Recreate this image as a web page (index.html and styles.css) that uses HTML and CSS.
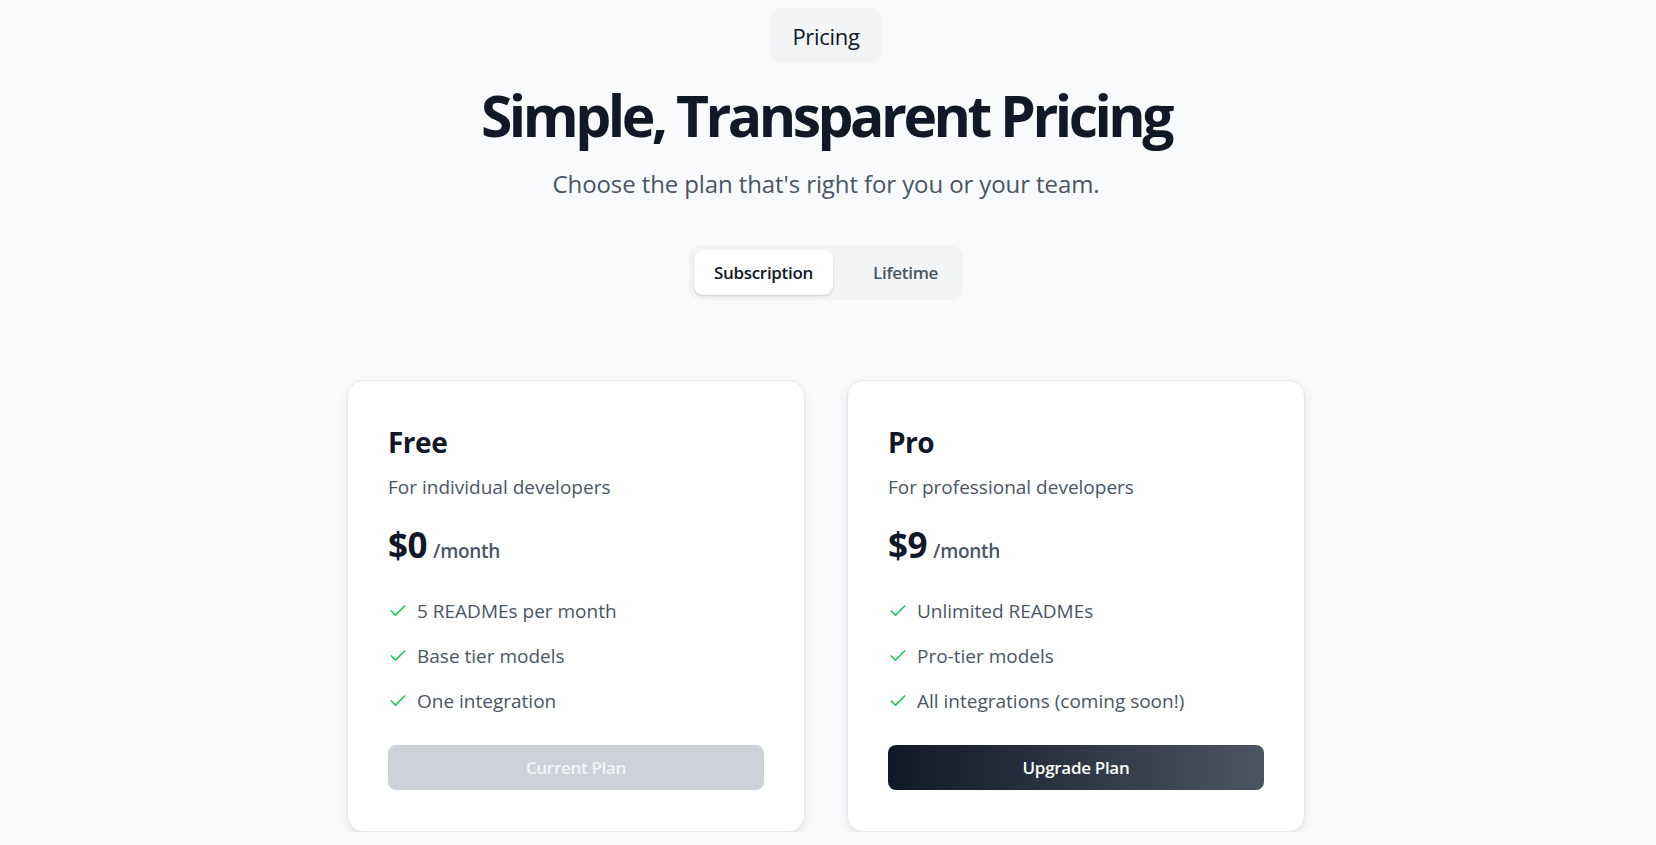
FILE: index.html
```html
<!DOCTYPE html>
<html lang="en">
<head>
<meta charset="utf-8">
<title>Pricing</title>
<link rel="stylesheet" href="styles.css">
</head>
<body>
<main class="page">
  <div class="badge">Pricing</div>
  <h1 class="title">Simple, Transparent Pricing</h1>
  <p class="subtitle">Choose the plan that's right for you or your team.</p>

  <div class="toggle">
    <button class="tab tab-active">Subscription</button>
    <button class="tab">Lifetime</button>
  </div>

  <section class="cards">
    <article class="card">
      <h2 class="plan-name">Free</h2>
      <p class="plan-desc">For individual developers</p>
      <div class="price"><span class="amount">$0</span><span class="period">/month</span></div>
      <ul class="features">
        <li><svg class="check" viewBox="0 0 24 24"><polyline points="20 6 9 17 4 12"/></svg>5 READMEs per month</li>
        <li><svg class="check" viewBox="0 0 24 24"><polyline points="20 6 9 17 4 12"/></svg>Base tier models</li>
        <li><svg class="check" viewBox="0 0 24 24"><polyline points="20 6 9 17 4 12"/></svg>One integration</li>
      </ul>
      <button class="btn btn-disabled">Current Plan</button>
    </article>

    <article class="card">
      <h2 class="plan-name">Pro</h2>
      <p class="plan-desc">For professional developers</p>
      <div class="price"><span class="amount">$9</span><span class="period">/month</span></div>
      <ul class="features">
        <li><svg class="check" viewBox="0 0 24 24"><polyline points="20 6 9 17 4 12"/></svg>Unlimited READMEs</li>
        <li><svg class="check" viewBox="0 0 24 24"><polyline points="20 6 9 17 4 12"/></svg>Pro-tier models</li>
        <li><svg class="check" viewBox="0 0 24 24"><polyline points="20 6 9 17 4 12"/></svg>All integrations (coming soon!)</li>
      </ul>
      <button class="btn btn-primary">Upgrade Plan</button>
    </article>
  </section>
</main>
</body>
</html>
```

FILE: styles.css
```css
* { box-sizing: border-box; }

html, body {
  margin: 0;
  padding: 0;
  background: #f9fafb;
}

body {
  font-family: "Open Sans", "Noto Sans", sans-serif;
  color: #111827;
}

.page {
  display: flex;
  flex-direction: column;
  align-items: center;
  padding: 8px 4px 0 0;
}

.badge {
  background: #f3f4f6;
  border-radius: 12px;
  height: 55px;
  padding: 0 22px;
  display: flex;
  align-items: center;
  font-size: 22px;
  letter-spacing: -0.3px;
  color: #111827;
}

.title {
  margin: 22px 0 0;
  font-size: 57px;
  line-height: 60px;
  font-weight: 700;
  letter-spacing: -3.5px;
  color: #111827;
}

.subtitle {
  margin: 23px 0 0;
  font-size: 24px;
  line-height: 32px;
  letter-spacing: -0.1px;
  color: #4b5563;
}

.toggle {
  margin-top: 45px;
  display: flex;
  gap: 20px;
  padding: 5px;
  background: #f3f4f6;
  border-radius: 12px;
}

.tab {
  border: 0;
  background: transparent;
  height: 45px;
  padding: 0 20px;
  border-radius: 9px;
  font-family: inherit;
  font-size: 17px;
  font-weight: 600;
  letter-spacing: -0.3px;
  color: #4b5563;
}

.tab-active {
  background: #ffffff;
  color: #111827;
  box-shadow: 0 1px 3px rgba(0, 0, 0, 0.12), 0 1px 2px rgba(0, 0, 0, 0.06);
}

.cards {
  margin-top: 80px;
  display: grid;
  grid-template-columns: 458px 458px;
  gap: 42px;
}

.card {
  background: #ffffff;
  border: 1px solid #e5e7eb;
  border-radius: 16px;
  padding: 43px 40px 41px;
  box-shadow: 0 4px 12px rgba(0, 0, 0, 0.06), 0 2px 4px rgba(0, 0, 0, 0.04);
  display: flex;
  flex-direction: column;
}

.plan-name {
  margin: 0;
  font-size: 28px;
  line-height: 36px;
  font-weight: 700;
  letter-spacing: -0.5px;
  color: #111827;
}

.plan-desc {
  margin: 13px 0 0;
  font-size: 19px;
  line-height: 28px;
  letter-spacing: 0;
  color: #4b5563;
}

.price {
  margin-top: 24px;
  display: flex;
  align-items: baseline;
  gap: 6px;
}

.amount {
  font-size: 35px;
  line-height: 40px;
  font-weight: 700;
  letter-spacing: -0.5px;
  color: #111827;
}

.period {
  font-size: 19px;
  font-weight: 600;
  letter-spacing: -0.3px;
  color: #4b5563;
}

.features {
  list-style: none;
  margin: 32px 0 0;
  padding: 0;
  display: flex;
  flex-direction: column;
  gap: 17px;
}

.features li {
  display: flex;
  align-items: center;
  gap: 9px;
  font-size: 19px;
  line-height: 28px;
  letter-spacing: 0;
  color: #4b5563;
}

.check {
  width: 20px;
  height: 20px;
  flex: none;
  fill: none;
  stroke: #22c55e;
  stroke-width: 2;
  stroke-linecap: round;
  stroke-linejoin: round;
}

.btn {
  margin-top: 30px;
  height: 45px;
  border: 0;
  border-radius: 8px;
  font-family: inherit;
  font-size: 17px;
  font-weight: 600;
  letter-spacing: -0.3px;
  color: #ffffff;
}

.btn-disabled {
  background: #cdd2d9;
  color: #f3f4f6;
}

.btn-primary {
  background: linear-gradient(90deg, #111827 0%, #4b5563 100%);
}
```
